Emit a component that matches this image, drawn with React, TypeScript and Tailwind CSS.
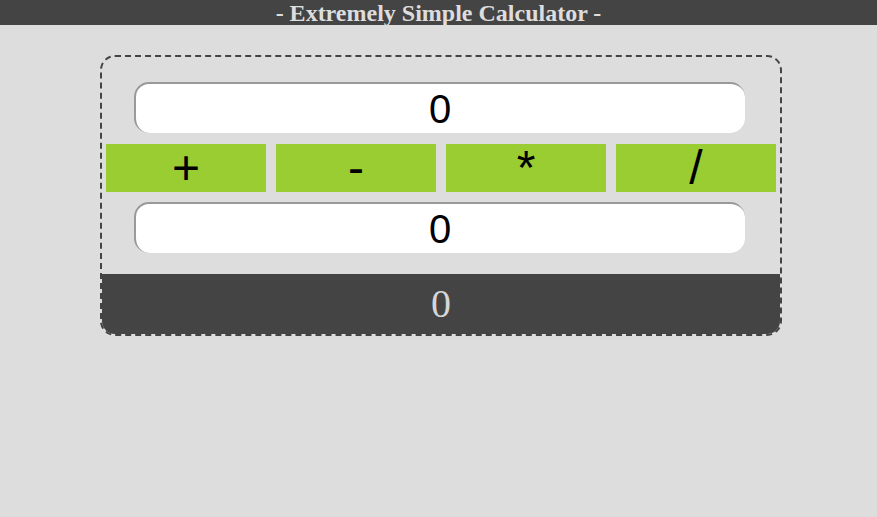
export default function App() {
  const ops = ['+', '-', '*', '/'];

  return (
    <div className="min-h-[517px] w-full bg-[#dddddd]">
      <header className="flex h-[25px] items-center justify-center overflow-hidden bg-[#444444]">
        <h1 className="text-[24px] font-bold leading-none text-[#dddddd] [font-family:'Liberation_Serif',serif]">
          - Extremely Simple Calculator -
        </h1>
      </header>

      <div className="ml-[100px] mt-[30px] w-[682px] overflow-hidden rounded-[15px] border-2 border-dashed border-[#444444]">
        <div className="flex flex-col items-center pt-[25px] pr-[4px]">
          <input
            readOnly
            value="0"
            className="h-[51px] w-[611px] rounded-[15px] border-t-2 border-l-2 border-[#999999] bg-white text-center text-[40px] text-black outline-none [font-family:'Liberation_Sans',Arial,sans-serif]"
          />
        </div>

        <div className="mt-[11px] flex gap-[10px] pl-[4px]">
          {ops.map((op) => (
            <button
              key={op}
              className="h-[48px] w-[160px] bg-[#9acd32] text-[48px] leading-none text-black [font-family:'Liberation_Sans',Arial,sans-serif]"
            >
              {op}
            </button>
          ))}
        </div>

        <div className="mt-[10px] flex flex-col items-center pr-[4px]">
          <input
            readOnly
            value="0"
            className="h-[51px] w-[611px] rounded-[15px] border-t-2 border-l-2 border-[#999999] bg-white text-center text-[40px] text-black outline-none [font-family:'Liberation_Sans',Arial,sans-serif]"
          />
        </div>

        <div className="mt-[21px] flex h-[60px] items-center justify-center bg-[#444444]">
          <span className="text-[40px] leading-none text-[#d6d6d6] [font-family:'Liberation_Serif',serif]">0</span>
        </div>
      </div>
    </div>
  );
}
